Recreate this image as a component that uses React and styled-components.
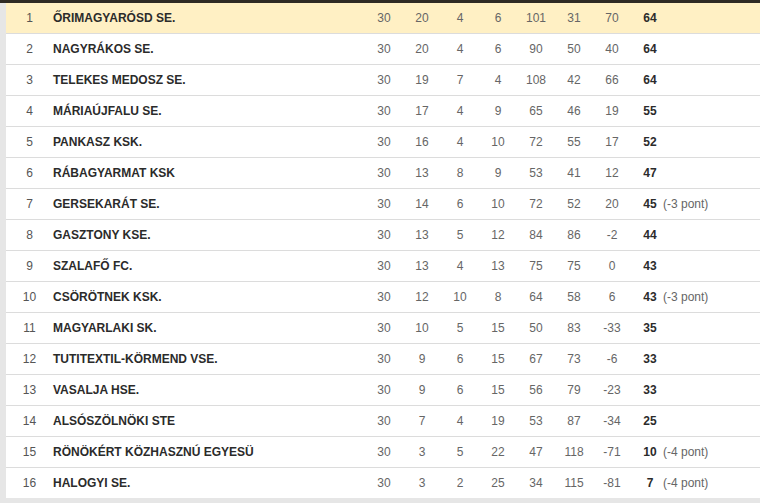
import styled, { createGlobalStyle } from 'styled-components';

const GlobalStyle = createGlobalStyle`
  body {
    margin: 0;
    background: #e6e6e6;
    font-family: "Liberation Sans", Arial, sans-serif;
    font-size: 12px;
  }
`;

const rows = [
  [1, 'ŐRIMAGYARÓSD SE.', 30, 20, 4, 6, 101, 31, 70, 64, ''],
  [2, 'NAGYRÁKOS SE.', 30, 20, 4, 6, 90, 50, 40, 64, ''],
  [3, 'TELEKES MEDOSZ SE.', 30, 19, 7, 4, 108, 42, 66, 64, ''],
  [4, 'MÁRIAÚJFALU SE.', 30, 17, 4, 9, 65, 46, 19, 55, ''],
  [5, 'PANKASZ KSK.', 30, 16, 4, 10, 72, 55, 17, 52, ''],
  [6, 'RÁBAGYARMAT KSK', 30, 13, 8, 9, 53, 41, 12, 47, ''],
  [7, 'GERSEKARÁT SE.', 30, 14, 6, 10, 72, 52, 20, 45, '(-3 pont)'],
  [8, 'GASZTONY KSE.', 30, 13, 5, 12, 84, 86, -2, 44, ''],
  [9, 'SZALAFŐ FC.', 30, 13, 4, 13, 75, 75, 0, 43, ''],
  [10, 'CSÖRÖTNEK KSK.', 30, 12, 10, 8, 64, 58, 6, 43, '(-3 pont)'],
  [11, 'MAGYARLAKI SK.', 30, 10, 5, 15, 50, 83, -33, 35, ''],
  [12, 'TUTITEXTIL-KÖRMEND VSE.', 30, 9, 6, 15, 67, 73, -6, 33, ''],
  [13, 'VASALJA HSE.', 30, 9, 6, 15, 56, 79, -23, 33, ''],
  [14, 'ALSÓSZÖLNÖKI STE', 30, 7, 4, 19, 53, 87, -34, 25, ''],
  [15, 'RÖNÖKÉRT KÖZHASZNÚ EGYESÜ', 30, 3, 5, 22, 47, 118, -71, 10, '(-4 pont)'],
  [16, 'HALOGYI SE.', 30, 3, 2, 25, 34, 115, -81, 7, '(-4 pont)'],
];

const Page = styled.div`
  padding-left: 6px;
  border-top: 3px solid #2e2a24;
`;

const Table = styled.div`
  background: #fff;
`;

const Row = styled.div`
  display: grid;
  grid-template-columns: 47px 312px repeat(7, 38px) 32px 1fr;
  align-items: center;
  height: 30px;
  background: ${p => (p.$highlight ? '#fff0c4' : '#fff')};
  & + & {
    border-top: 1px solid #dcdcdc;
  }
`;

const Rank = styled.div`
  text-align: center;
  color: #555;
`;

const Team = styled.div`
  font-weight: bold;
  color: #2b2b2b;
  white-space: nowrap;
`;

const Num = styled.div`
  text-align: center;
  color: #666;
`;

const Points = styled.div`
  padding-left: 6px;
  text-align: center;
  font-weight: bold;
  color: #2b2b2b;
`;

const Note = styled.div`
  color: #666;
  white-space: nowrap;
`;

export default function App() {
  return (
    <Page>
      <GlobalStyle />
      <Table>
        {rows.map(([rank, team, ...rest]) => {
          const stats = rest.slice(0, 7);
          const pts = rest[7];
          const note = rest[8];
          return (
            <Row key={rank} $highlight={rank === 1}>
              <Rank>{rank}</Rank>
              <Team>{team}</Team>
              {stats.map((v, i) => (
                <Num key={i}>{v}</Num>
              ))}
              <Points>{pts}</Points>
              <Note>{note}</Note>
            </Row>
          );
        })}
      </Table>
    </Page>
  );
}
